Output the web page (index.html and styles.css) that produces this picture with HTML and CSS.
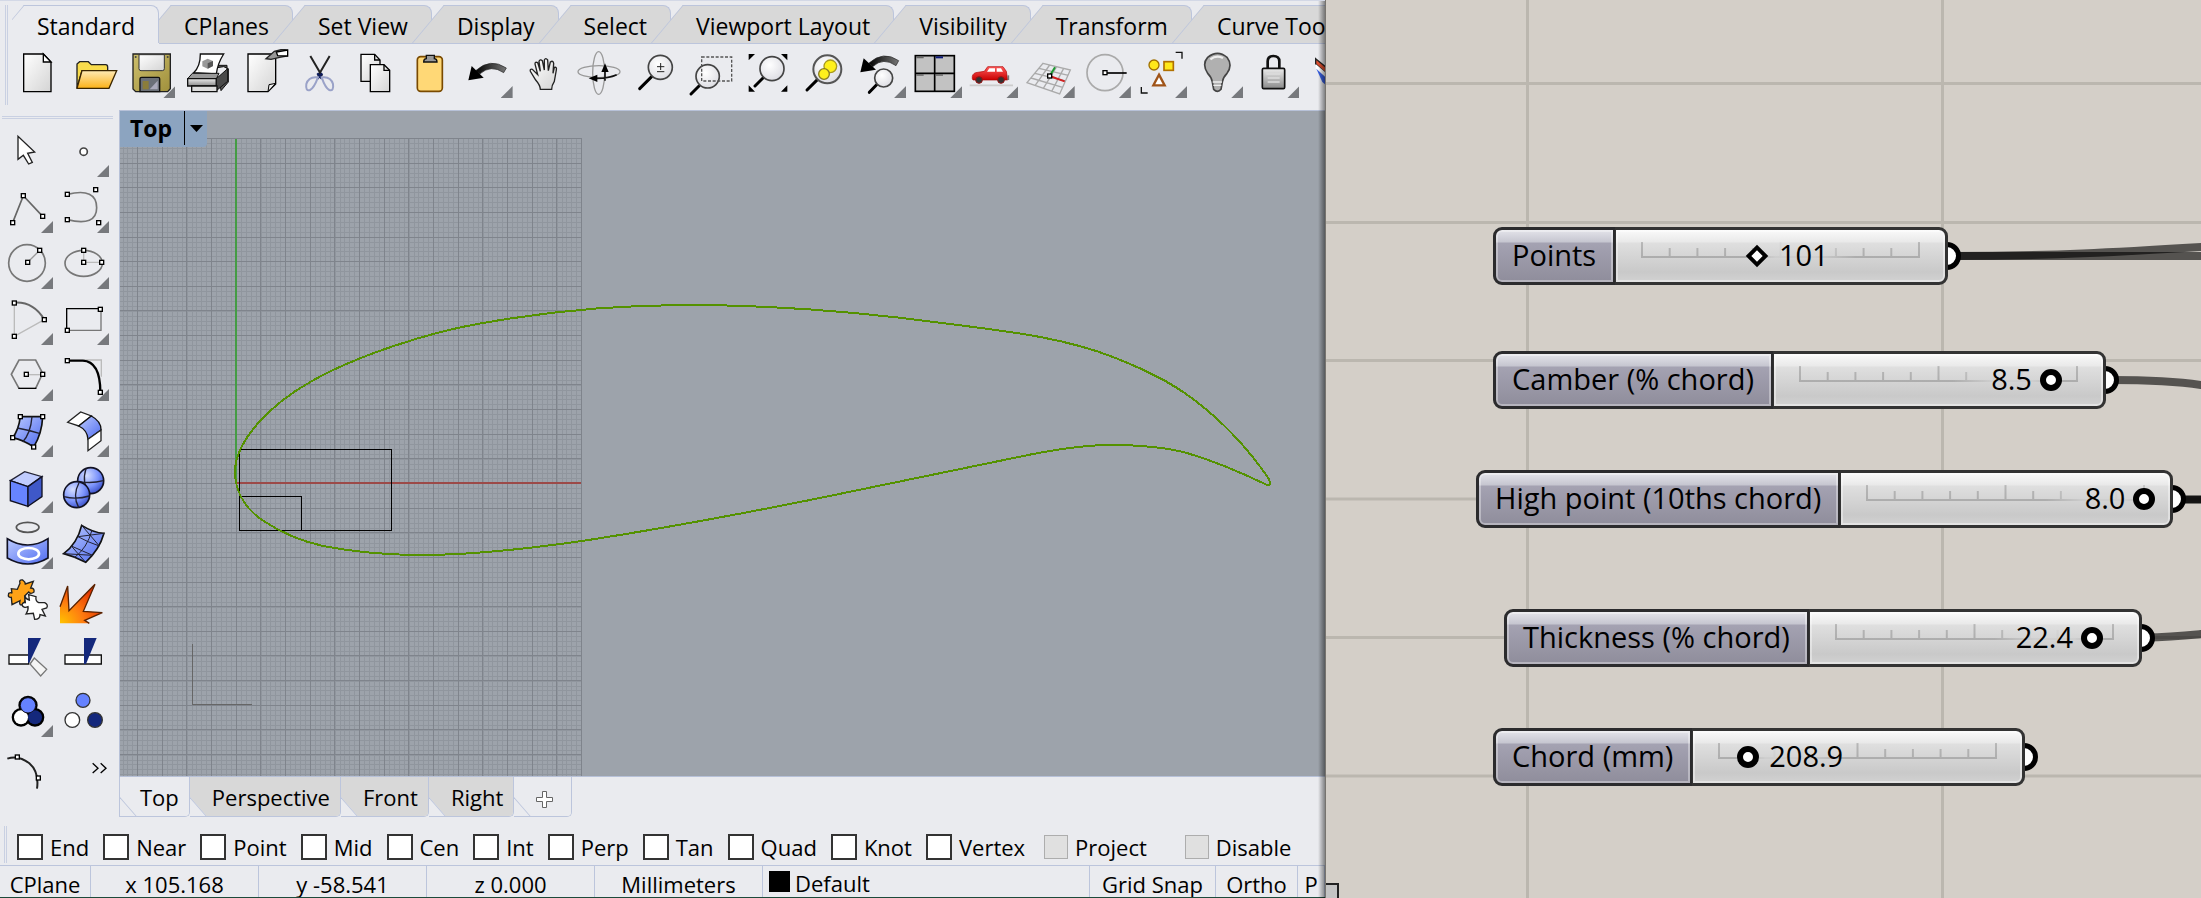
FILE: index.html
```html
<!DOCTYPE html>
<html lang="en">
<head>
<meta charset="utf-8">
<title>Airfoil – Rhino and Grasshopper</title>
<link rel="stylesheet" href="styles.css">
</head>
<body>
<svg class="defs" aria-hidden="true">
  <defs>
    <rect id="nd" x="-6" y="-6" width="12" height="12" fill="#fff" stroke="#000" stroke-width="4"/>
    <linearGradient id="gPaper" x1="0" y1="0" x2="1" y2="1"><stop offset="0" stop-color="#fff"/><stop offset="1" stop-color="#d4d4d4"/></linearGradient>
    <linearGradient id="gGold" x1="0" y1="0" x2="0" y2="1"><stop offset="0" stop-color="#ffeab5"/><stop offset="1" stop-color="#fbb117"/></linearGradient>
    <linearGradient id="gOlive" x1="0" y1="0" x2="1" y2="1"><stop offset="0" stop-color="#cdbf6c"/><stop offset="1" stop-color="#a0903c"/></linearGradient>
    <linearGradient id="gGrey" x1="0" y1="0" x2="0" y2="1"><stop offset="0" stop-color="#ececec"/><stop offset="1" stop-color="#8a8a8a"/></linearGradient>
    <linearGradient id="gSweep" x1="0" y1="0" x2="1" y2="0"><stop offset="0" stop-color="#000"/><stop offset="1" stop-color="#777"/></linearGradient>
    <linearGradient id="gBlue" x1="0" y1="0" x2="1" y2="1"><stop offset="0" stop-color="#bccbff"/><stop offset="1" stop-color="#4f6bf0"/></linearGradient>
    <linearGradient id="gRed" x1="0" y1="0" x2="0" y2="1"><stop offset="0" stop-color="#ff5a5a"/><stop offset="1" stop-color="#c80000"/></linearGradient>
    <radialGradient id="gBall" cx=".35" cy=".3" r=".75"><stop offset="0" stop-color="#d5deff"/><stop offset=".6" stop-color="#7b93fb"/><stop offset="1" stop-color="#3a50c8"/></radialGradient>
    <radialGradient id="gFire" cx="0" cy="1" r="1.1"><stop offset="0" stop-color="#ffc400"/><stop offset=".5" stop-color="#ff7d10"/><stop offset="1" stop-color="#e03000"/></radialGradient>
    <radialGradient id="gLens" cx=".4" cy=".35" r=".7"><stop offset="0" stop-color="#fff"/><stop offset="1" stop-color="#dcdce2"/></radialGradient>
  </defs>
</svg>

<div class="desktop">
<main class="rhino">
  <nav class="tabs" aria-label="Toolbar groups">
    <button class="tab active"><span>Standard</span></button>
    <button class="tab"><span>CPlanes</span></button>
    <button class="tab"><span>Set View</span></button>
    <button class="tab"><span>Display</span></button>
    <button class="tab"><span>Select</span></button>
    <button class="tab"><span>Viewport Layout</span></button>
    <button class="tab"><span>Visibility</span></button>
    <button class="tab"><span>Transform</span></button>
    <button class="tab"><span>Curve Tools</span></button>
  </nav>

  <div class="toolbar">
    <button class="tool" aria-label="New"><svg viewBox="39 147 156 150"><path d="M71 162H130L153 186V275H71Z" fill="url(#gPaper)" stroke="#000" stroke-width="4"/><path d="M130 162V186H153Z" fill="#fff" stroke="#000" stroke-width="4"/></svg></button>
    <button class="tool" aria-label="Open"><svg viewBox="208 147 156 150"><path d="M232 264V192L240 185H266L275 194H318Q324 194 324 202V212H247L232 264Z" fill="#f9dc4c" stroke="#222" stroke-width="4"/><path d="M247 212H351L328 265H232Z" fill="url(#gGold)" stroke="#3a2500" stroke-width="4"/></svg></button>
    <button class="tool more" aria-label="Save"><svg viewBox="376 147 156 150"><path d="M400 162H512V266L504 275H408L400 267Z" fill="url(#gOlive)" stroke="#222" stroke-width="4"/><path d="M418 164H494V206Q494 212 488 212H424Q418 212 418 206Z" fill="url(#gPaper)" stroke="#333" stroke-width="3"/><path d="M421 275V236Q421 232 426 232H476Q480 232 480 236V275Z" fill="#6b7078" stroke="#111" stroke-width="4"/><rect x="429" y="243" width="18" height="25" fill="#8b7d3a"/><path d="M450 268H474V242Z" fill="#aab"/><circle cx="408" cy="171" r="3" fill="#444"/><circle cx="504" cy="171" r="3" fill="#444"/></svg></button>
    <button class="tool" aria-label="Print"><svg viewBox="545 147 156 150"><path d="M590 212L622 196H680V212L656 232L662 272L684 246V206L670 200Z" fill="#555" stroke="#111" stroke-width="3"/><path d="M580 218Q600 200 600 162H670Q652 190 648 222Z" fill="#fff" stroke="#111" stroke-width="4"/><path d="M606 184L622 176L638 183V198L622 206L606 199Z" fill="#999"/><path d="M622 190L638 183V198L622 206Z" fill="#555"/><path d="M562 236L576 220H656L648 236Z" fill="#999" stroke="#111" stroke-width="3"/><path d="M562 236H648V258H562Z" fill="url(#gGrey)" stroke="#111" stroke-width="4"/><path d="M648 236L682 206V244L648 272Z" fill="#4a4a4a" stroke="#111" stroke-width="3"/><path d="M574 258H650V275H574Z" fill="#ddd" stroke="#111" stroke-width="4"/></svg></button>
    <button class="tool" aria-label="Document properties"><svg viewBox="713 147 156 150"><path d="M743 162H826V252L803 275H743Z" fill="url(#gPaper)" stroke="#000" stroke-width="4"/><path d="M803 275L806 254L826 250Z" fill="#eee" stroke="#000" stroke-width="3"/><path d="M797 176L822 154L846 148L861 150V168L838 172L812 178Z" fill="#999" stroke="#222" stroke-width="4"/><path d="M828 156L862 150V168L832 167Z" fill="#fff" stroke="#000" stroke-width="4"/></svg></button>
    <button class="tool" aria-label="Cut"><svg viewBox="882 147 156 150" fill="none"><path d="M931 168L966 228M989 168L954 228" stroke="#222" stroke-width="6"/><path d="M952 220L966 236M967 220L952 236" stroke="#0d1b5a" stroke-width="7"/><path d="M954 232Q926 228 919 252Q916 274 930 270Q942 264 954 232ZM965 232Q992 228 999 252Q1002 274 988 270Q976 264 965 232Z" stroke="#9aa2c8" stroke-width="6"/></svg></button>
    <button class="tool" aria-label="Copy"><svg viewBox="1051 147 156 150"><path d="M1084 163H1125L1141 180V244H1084Z" fill="url(#gPaper)" stroke="#000" stroke-width="4"/><path d="M1125 163V180H1141" fill="none" stroke="#000" stroke-width="4"/><path d="M1112 194H1153L1170 211V275H1112Z" fill="url(#gPaper)" stroke="#000" stroke-width="4"/><path d="M1153 194V211H1170" fill="none" stroke="#000" stroke-width="4"/></svg></button>
    <button class="tool" aria-label="Paste"><svg viewBox="1219 147 156 150"><rect x="1253" y="170" width="75" height="104" rx="10" fill="#ffd876" stroke="#7a4a00" stroke-width="5"/><path d="M1272 186Q1272 176 1280 176V166H1304V176Q1312 176 1312 186Z" fill="#999" stroke="#111" stroke-width="4"/></svg></button>
    <button class="tool more" aria-label="Undo"><svg viewBox="38 147 156 150"><path d="M76 212Q120 172 168 204L160 218Q122 192 88 222Z" fill="url(#gSweep)" stroke="#222" stroke-width="2"/><path d="M54 241L64 198L100 233Z" fill="#000"/></svg></button>
    <button class="tool" aria-label="Pan"><svg viewBox="206 147 156 150"><path d="M270 268Q270 256 256 240L240 214Q238 206 246 208L262 224L254 192Q254 184 262 188L270 214L266 184Q270 176 276 182L282 210L282 180Q286 172 292 180L294 212L300 186Q308 180 310 190L308 220L312 202Q320 200 318 210L312 244Q304 256 304 268Z" fill="url(#gPaper)" stroke="#222" stroke-width="4"/></svg></button>
    <button class="tool" aria-label="Rotate view"><svg viewBox="375 147 156 150" fill="none"><ellipse cx="447" cy="215" rx="63" ry="18" stroke="#999" stroke-width="4"/><ellipse cx="446" cy="219" rx="18" ry="64" stroke="#999" stroke-width="4"/><path d="M465 242V210M434 235Q474 236 500 224" stroke="#111" stroke-width="5"/><path d="M465 190L476 216H454ZM416 235L442 224V246Z" fill="#000"/></svg></button>
    <button class="tool" aria-label="Zoom dynamic"><svg viewBox="544 147 156 150"><path d="M606 230L570 266" stroke="#000" stroke-width="9" stroke-linecap="round"/><circle cx="632" cy="202" r="36" fill="url(#gLens)" stroke="#444" stroke-width="5"/><path d="M622 200H644M633 189V210M622 215H644" stroke="#222" stroke-width="3" fill="none"/></svg></button>
    <button class="tool" aria-label="Zoom window"><svg viewBox="712 147 156 150"><path d="M748 258L724 282" stroke="#000" stroke-width="9" stroke-linecap="round"/><circle cx="774" cy="229" r="35" fill="url(#gLens)" stroke="#444" stroke-width="5"/><rect x="756" y="171" width="90" height="72" fill="none" stroke="#555" stroke-width="4" stroke-dasharray="9 5"/></svg></button>
    <button class="tool" aria-label="Zoom extents"><svg viewBox="881 147 156 150"><path d="M938 234L914 258" stroke="#000" stroke-width="9" stroke-linecap="round"/><circle cx="965" cy="206" r="36" fill="url(#gLens)" stroke="#444" stroke-width="5"/><path d="M895 162H914L895 181ZM1011 162H992L1011 181ZM895 275H914L895 256ZM1011 275H992L1011 256Z"/></svg></button>
    <button class="tool" aria-label="Zoom selected"><svg viewBox="1049 147 156 150"><path d="M1102 238L1070 270" stroke="#000" stroke-width="9" stroke-linecap="round"/><circle cx="1131" cy="208" r="42" fill="url(#gLens)" stroke="#555" stroke-width="6"/><circle cx="1140" cy="199" r="19" fill="#fff01c" stroke="#a89a20" stroke-width="4"/><circle cx="1121" cy="222" r="16" fill="#fff01c" stroke="#8a7d20" stroke-width="4"/></svg></button>
    <button class="tool more" aria-label="Undo view change"><svg viewBox="1218 147 156 150"><path d="M1256 190Q1300 150 1346 182L1338 197Q1300 170 1268 200Z" fill="url(#gSweep)" stroke="#222" stroke-width="2"/><path d="M1231 217L1241 175L1278 209Z"/><path d="M1282 252L1258 277" stroke="#000" stroke-width="9" stroke-linecap="round"/><circle cx="1301" cy="234" r="27" fill="url(#gLens)" stroke="#444" stroke-width="5"/></svg></button>
    <button class="tool more" aria-label="Four viewports"><svg viewBox="67 147 156 150"><rect x="77" y="167" width="117" height="107" fill="#c2c2c2" stroke="#000" stroke-width="5"/><path d="M135 167V274M77 220H194" stroke="#000" stroke-width="5"/><path d="M80 172H102M80 225H102M138 225H160" stroke="#666" stroke-width="5"/><path d="M138 172H160" stroke="#0d1b7a" stroke-width="6"/></svg></button>
    <button class="tool more" aria-label="Set view"><svg viewBox="235 147 156 150"><path d="M240 256H370" stroke="#ccc" stroke-width="5"/><path d="M248 236Q246 222 258 218L284 214L294 200H340L350 214L354 240H250Z" fill="url(#gRed)" stroke="#b00000" stroke-width="2"/><path d="M292 215L299 205H316V215ZM321 205H334L340 215H321Z" fill="#fff"/><circle cx="268" cy="240" r="10" fill="#333" stroke="#911" stroke-width="3"/><circle cx="334" cy="240" r="10" fill="#333" stroke="#911" stroke-width="3"/><path d="M356 226V240" stroke="#777" stroke-width="5"/></svg></button>
    <button class="tool more" aria-label="Set CPlane"><svg viewBox="404 147 156 150" fill="none"><path d="M458 190L540 210L508 282L410 248ZM446 205L534 226M434 220L526 243M422 234L517 262M478 195L434 257M499 200L459 265M520 205L484 274" stroke="#aaa" stroke-width="4"/><path d="M478 228L494 202" stroke="#1c9a30" stroke-width="6"/><path d="M478 228L523 244" stroke="#d02020" stroke-width="6"/><use href="#nd" x="478" y="228"/></svg></button>
    <button class="tool more" aria-label="Object snap"><svg viewBox="572 147 156 150"><circle cx="644" cy="218" r="54" fill="none" stroke="#aaa" stroke-width="5"/><path d="M644 219H709" stroke="#000" stroke-width="5"/><use href="#nd" x="644" y="218"/></svg></button>
    <button class="tool more" aria-label="Select objects"><svg viewBox="741 147 156 150"><circle cx="792" cy="195" r="15" fill="#ffe81a" stroke="#a07000" stroke-width="4"/><rect x="822" y="185" width="28" height="26" fill="#ffe81a" stroke="#b07000" stroke-width="5"/><path d="M807 224L824 256H790Z" fill="#fff" stroke="#a05418" stroke-width="7"/><path d="M857 157H876V176M754 261V279H773" fill="none" stroke="#111" stroke-width="4"/></svg></button>
    <button class="tool more" aria-label="Lights"><svg viewBox="910 147 156 150"><path d="M968 246Q966 232 954 220Q936 192 954 172Q984 148 1012 172Q1030 196 1012 220Q1000 232 998 246L994 268Q984 280 972 268Z" fill="#b0b0b0" stroke="#444" stroke-width="5"/><path d="M962 178Q980 164 1000 174" stroke="#eee" stroke-width="7" fill="none"/><path d="M969 246H997M971 256H995" stroke="#eee" stroke-width="4"/></svg></button>
    <button class="tool more" aria-label="Lock"><svg viewBox="1078 147 156 150"><path d="M1134 206V184Q1134 168 1151 168Q1169 168 1169 184V206" fill="none" stroke="#111" stroke-width="8"/><rect x="1118" y="205" width="67" height="61" rx="4" fill="url(#gGrey)" stroke="#111" stroke-width="5"/><path d="M1130 222H1172M1134 234H1170M1134 246H1170" stroke="#ddd" stroke-width="4"/></svg></button>
    <button class="tool" aria-label="Layers"><svg viewBox="1247 147 156 150"><path d="M1276 176L1330 220V240L1276 192Z" fill="#e05030" stroke="#222" stroke-width="4"/><path d="M1276 192L1330 238V254L1276 206Z" fill="#fff"/><path d="M1278 206L1330 254V276L1296 246Z" fill="#3a60e0"/></svg></button>
  </div>

  <section class="work">
    <aside class="sidebar">
      <button class="tool" aria-label="Select"><svg viewBox="3 63 156 168"><path d="M54 109V178L70 166L86 192L97 187L83 160L104 156Z" fill="#fff" stroke="#222" stroke-width="4"/></svg></button>
      <button class="tool more" aria-label="Point"><svg viewBox="171 63 156 168"><circle cx="251" cy="155" r="11" fill="#fff" stroke="#444" stroke-width="5"/></svg></button>
      <button class="tool more" aria-label="Polyline"><svg viewBox="3 231 156 168"><path d="M38 368L70 287L128 349" fill="none" stroke="#666" stroke-width="5"/><use href="#nd" x="38" y="368"/><use href="#nd" x="70" y="287"/><use href="#nd" x="128" y="349"/></svg></button>
      <button class="tool more" aria-label="Curve"><svg viewBox="171 231 156 168"><path d="M202 283Q290 262 290 323Q290 380 202 359" fill="none" stroke="#777" stroke-width="5"/><use href="#nd" x="202" y="283"/><use href="#nd" x="287" y="269"/><use href="#nd" x="202" y="359"/><use href="#nd" x="296" y="368"/></svg></button>
      <button class="tool more" aria-label="Circle"><svg viewBox="3 399 156 168"><circle cx="81" cy="489" r="55" fill="none" stroke="#777" stroke-width="5"/><path d="M83 487L119 451" stroke="#999" stroke-width="4"/><use href="#nd" x="83" y="487"/><use href="#nd" x="119" y="451"/></svg></button>
      <button class="tool more" aria-label="Ellipse"><svg viewBox="171 399 156 168"><ellipse cx="251" cy="490" rx="56" ry="39" fill="none" stroke="#777" stroke-width="5"/><path d="M251 451V487H305" fill="none" stroke="#bbb" stroke-width="4"/><use href="#nd" x="251" y="451"/><use href="#nd" x="251" y="487"/><use href="#nd" x="305" y="487"/></svg></button>
      <button class="tool more" aria-label="Arc"><svg viewBox="3 567 156 168"><path d="M43 609V709L133 659" fill="none" stroke="#bbb" stroke-width="4"/><path d="M43 608Q100 604 133 659" fill="none" stroke="#666" stroke-width="6"/><use href="#nd" x="43" y="609"/><use href="#nd" x="43" y="709"/><use href="#nd" x="133" y="659"/></svg></button>
      <button class="tool more" aria-label="Rectangle"><svg viewBox="171 567 156 168"><path d="M200 691V626H301" fill="none" stroke="#000" stroke-width="4"/><path d="M200 691H303V626" fill="none" stroke="#777" stroke-width="4"/><use href="#nd" x="301" y="628"/><use href="#nd" x="202" y="691"/></svg></button>
      <button class="tool more" aria-label="Polygon"><svg viewBox="3 735 156 168"><path d="M57 865L34 823L57 780H107L128 820L107 865" fill="none" stroke="#777" stroke-width="5"/><path d="M55 865H109" stroke="#000" stroke-width="4"/><path d="M79 824H128" stroke="#bbb" stroke-width="4"/><use href="#nd" x="79" y="823"/><use href="#nd" x="128" y="823"/></svg></button>
      <button class="tool more" aria-label="Fillet"><svg viewBox="171 735 156 168"><path d="M250 780H304V830" fill="none" stroke="#bbb" stroke-width="4"/><path d="M202 782H248Q301 784 301 877" fill="none" stroke="#000" stroke-width="7"/><use href="#nd" x="202" y="782"/><use href="#nd" x="301" y="877"/></svg></button>
      <button class="tool more" aria-label="Surface from points"><svg viewBox="3 903 156 168"><path d="M61 950H128Q126 1000 101 1041Q70 1020 38 1013Q56 990 61 950Z" fill="url(#gBlue)" stroke="#111" stroke-width="5"/><path d="M96 950Q92 1000 68 1026M52 984Q84 990 118 1000" fill="none" stroke="#223" stroke-width="4"/><use href="#nd" x="61" y="950"/><use href="#nd" x="128" y="950"/><use href="#nd" x="38" y="1013"/><use href="#nd" x="101" y="1041"/></svg></button>
      <button class="tool more" aria-label="Fillet surface"><svg viewBox="171 903 156 168"><path d="M203 967L242 936L274 948L236 978Z" fill="#fff" stroke="#222" stroke-width="4"/><path d="M236 978L274 948Q304 964 303 990L264 1018Q262 990 236 978Z" fill="url(#gBlue)" stroke="#111" stroke-width="4"/><path d="M264 1018L303 990V1022L264 1052Z" fill="#fff" stroke="#222" stroke-width="4"/></svg></button>
      <button class="tool more" aria-label="Box"><svg viewBox="3 51 156 168"><path d="M31 122L74 95L126 110L84 140Z" fill="#c0ccff" stroke="#223" stroke-width="4"/><path d="M31 122L84 140V199L31 182Z" fill="#6784ff" stroke="#112" stroke-width="4"/><path d="M84 140L126 110V170L84 199Z" fill="#3f58c8" stroke="#112" stroke-width="4"/></svg></button>
      <button class="tool more" aria-label="Boolean union"><svg viewBox="171 51 156 168"><circle cx="272" cy="122" r="39" fill="url(#gBall)" stroke="#112" stroke-width="5"/><path d="M258 86Q244 130 270 160M236 124Q272 132 310 122" fill="none" stroke="#223" stroke-width="4"/><circle cx="230" cy="164" r="39" fill="url(#gBall)" stroke="#112" stroke-width="5"/><path d="M238 126Q216 168 236 202M192 170Q228 180 268 168" fill="none" stroke="#223" stroke-width="4"/></svg></button>
      <button class="tool more" aria-label="Project to surface"><svg viewBox="3 219 156 168"><ellipse cx="83" cy="262" rx="34" ry="15" fill="none" stroke="#555" stroke-width="5"/><path d="M22 296Q84 334 144 296V354Q84 390 22 354Z" fill="url(#gBlue)" stroke="#112" stroke-width="5"/><ellipse cx="86" cy="341" rx="31" ry="17" fill="none" stroke="#fff" stroke-width="8"/></svg></button>
      <button class="tool more" aria-label="Mesh"><svg viewBox="171 219 156 168"><path d="M245 256Q280 278 312 280Q298 330 257 367Q226 350 191 341Q232 310 245 256Z" fill="url(#gBlue)" stroke="#111" stroke-width="5"/><path d="M276 270Q262 324 222 354M234 290Q262 306 298 318M214 318Q250 334 278 346M245 256L298 318M214 318L257 367M312 280L234 290M278 346L191 341" fill="none" stroke="#223" stroke-width="3"/></svg></button>
      <button class="tool" aria-label="Join"><svg viewBox="3 387 156 168"><path d="M60 430Q56 418 68 420Q76 426 76 432L100 424L92 444Q104 444 102 456Q92 464 86 456L74 468Q80 482 68 494Q56 498 60 482L36 494L34 472Q22 474 26 460Q34 456 36 460L34 446L52 448Z" fill="#ffa216" stroke="#222" stroke-width="4"/><path d="M74 468Q76 476 88 480L86 464L108 470Q106 484 116 488L134 488Q146 494 140 504L126 508L136 528L120 524Q120 538 104 538L100 520L78 522Q86 510 84 500Q70 506 66 494Q68 486 76 488Z" fill="#fff" stroke="#222" stroke-width="4"/></svg></button>
      <button class="tool" aria-label="Explode"><svg viewBox="171 387 156 168"><path d="M180 500L203 438L207 512L285 433L250 514L307 518L254 541L268 550H180Z" fill="url(#gFire)"/><path d="M180 500L203 438L207 512L285 433L250 514L307 518L254 541L268 550" fill="none" stroke="#5a2200" stroke-width="4"/></svg></button>
      <button class="tool" aria-label="Trim"><svg viewBox="3 555 156 168"><path d="M27 645H86V672H27Z" fill="#fff" stroke="#111" stroke-width="4"/><path d="M84 594H123L88 668H84Z" fill="#14287c"/><path d="M90 672L103 654L140 688L122 708Z" fill="#f4f4f4" stroke="#777" stroke-width="4"/></svg></button>
      <button class="tool" aria-label="Split"><svg viewBox="171 555 156 168"><path d="M195 645H304V672H195Z" fill="#fff" stroke="#111" stroke-width="4"/><path d="M252 594H290L258 672H252Z" fill="#14287c"/></svg></button>
      <button class="tool more" aria-label="Group"><svg viewBox="3 723 156 168"><g stroke="#000" stroke-width="10"><circle cx="63" cy="832" r="23"/><circle cx="105" cy="832" r="23"/><circle cx="84" cy="796" r="24"/></g><circle cx="63" cy="832" r="21" fill="#fff"/><circle cx="105" cy="832" r="21" fill="#14287c"/><circle cx="84" cy="796" r="23" fill="#6582ff" stroke="#112" stroke-width="3"/></svg></button>
      <button class="tool" aria-label="Ungroup"><svg viewBox="171 723 156 168" stroke="#333" stroke-width="4"><circle cx="249" cy="781" r="21" fill="#6582ff"/><circle cx="217" cy="840" r="22" fill="#fff"/><circle cx="285" cy="840" r="22" fill="#14287c"/></svg></button>
      <button class="tool" aria-label="Edit points"><svg viewBox="3 891 156 168"><path d="M22 956Q56 944 88 970Q118 996 111 1046" fill="none" stroke="#222" stroke-width="6"/><use href="#nd" x="52" y="951"/><use href="#nd" x="115" y="1014"/></svg></button>
      <button class="tool" aria-label="More tools"><svg viewBox="171 891 156 168"><path d="M278 970L294 985L278 999M302 970L318 985L302 999" fill="none" stroke="#000" stroke-width="4"/></svg></button>
    </aside>

    <div class="stage">
      <div class="viewport">
        <svg class="scene" role="img" aria-label="Top view of the airfoil curve">
          <g transform="translate(-120 -111)" fill="none" shape-rendering="crispEdges">
            <path d="M122.5 457H582" stroke="#90969e" stroke-width="638" stroke-dasharray="1 3.933"/>
            <path d="M351 138V776" stroke="#90969e" stroke-width="462" stroke-dasharray="1 3.933"/>
            <path d="M137 457H583" stroke="#7f848c" stroke-width="638" stroke-dasharray="1 23.666"/>
            <path d="M351 138V776" stroke="#7f848c" stroke-width="462" stroke-dasharray="1 23.64"/>
            <path d="M236 139V483" stroke="#459c45" stroke-width="2"/>
            <path d="M236 483H581" stroke="#9c4a48" stroke-width="2"/>
            <path d="M239 449H391V530H239ZM239 496H301V530" transform="translate(.5 .5)" stroke="#000"/>
            <path d="M192.500 644V704.500H252" stroke="#666"/>
            <path d="M235 472C235 440 272 403 312 381C354 357 428 332 483 323C550 311 619 305 687 305C775 305 862 312 950 324C1004 331 1062 337 1113 357C1141 368 1168 380 1193 399C1221 420 1247 447 1269 479Q1272 488 1265 484C1240 472 1214 461 1187 453C1161 446 1136 445 1110 445C1084 445 1059 449 1033 454C959 469 885 485 810 500C735 515 660 529 582 541C526 549 475 555 422 555C387 555 354 552 323 546C300 541 280 532 262 520C245 508 235 491 235 472Z" stroke="#549200" stroke-width="2"/>
          </g>
        </svg>
        <div class="view-title"><button class="view-name">Top</button><button class="view-menu" aria-label="Viewport menu"><svg viewBox="0 0 13 8"><path d="M0 0H13L6.500 7Z"/></svg></button></div>
      </div>
      <nav class="view-tabs" aria-label="Viewports">
        <button class="vtab active"><span>Top</span></button>
        <button class="vtab"><span>Perspective</span></button>
        <button class="vtab"><span>Front</span></button>
        <button class="vtab"><span>Right</span></button>
        <button class="vtab add active" aria-label="Add viewport"><svg viewBox="0 0 18 18"><path d="M6.500 .5H10.500V6.500H16.500V10.500H10.500V16.500H6.500V10.500H.5V6.500H6.500Z" fill="#fff" stroke="#666"/></svg></button>
      </nav>
    </div>
  </section>

  <div class="osnap">
    <label><input type="checkbox">End</label>
    <label><input type="checkbox">Near</label>
    <label><input type="checkbox">Point</label>
    <label><input type="checkbox">Mid</label>
    <label><input type="checkbox">Cen</label>
    <label><input type="checkbox">Int</label>
    <label><input type="checkbox">Perp</label>
    <label><input type="checkbox">Tan</label>
    <label><input type="checkbox">Quad</label>
    <label><input type="checkbox">Knot</label>
    <label><input type="checkbox">Vertex</label>
    <label class="off"><input type="checkbox" disabled>Project</label>
    <label class="off"><input type="checkbox" disabled>Disable</label>
  </div>

  <footer class="status">
    <button class="cell plane">CPlane</button>
    <span class="cell">x 105.168</span>
    <span class="cell">y -58.541</span>
    <span class="cell">z 0.000</span>
    <span class="cell">Millimeters</span>
    <button class="cell layer"><i class="swatch"></i>Default</button>
    <button class="cell snap">Grid Snap</button>
    <button class="cell ortho">Ortho</button>
    <button class="cell planar">P</button>
  </footer>
</main>

<section class="canvas" aria-label="Grasshopper canvas">
  <svg class="wires" aria-hidden="true">
    <g transform="translate(-1326 0)" fill="none">
      <path d="M1325 83.500H2600M1325 222.500H2600M1325 360.500H2600M1325 499H2600M1325 637.500H2600M1325 776H2600M1527.500 0V1200M1942.500 0V1200" stroke="#bbb7af" stroke-width="3"/>
      <g stroke="#000" stroke-opacity=".6" stroke-width="8">
        <path d="M1950 256H2600"/>
        <path d="M1950 256C2050 256 2120 252 2201 247S2400 220 2600 200"/>
        <path d="M2110 380C2150 380 2175 381 2201 385S2400 420 2600 440"/>
        <path d="M2180 499.500H2600" stroke-opacity=".9"/>
        <path d="M2145 637.500C2170 637 2180 636 2201 634S2400 600 2600 580"/>
      </g>
    </g>
  </svg>

  <div class="node points">
    <label class="name" for="points">Points</label>
    <div class="track after" style="--pos:.418">
      <svg class="ticks" viewBox="0 0 281 20"><use href="#scale"/></svg>
      <input id="points" class="diamond" type="range" min="0" max="1000" value="418">
      <output for="points">101</output>
    </div>
  </div>
  <div class="node camber">
    <label class="name" for="camber">Camber (% chord)</label>
    <div class="track before" style="--pos:.906">
      <svg class="ticks" viewBox="0 0 281 20"><use href="#scale"/></svg>
      <input id="camber" type="range" min="0" max="1000" value="906">
      <output for="camber">8.5</output>
    </div>
  </div>
  <div class="node high">
    <label class="name" for="high">High point (10ths chord)</label>
    <div class="track before" style="--pos:1">
      <svg class="ticks" viewBox="0 0 281 20"><use href="#scale"/></svg>
      <input id="high" type="range" min="0" max="1000" value="1000">
      <output for="high">8.0</output>
    </div>
  </div>
  <div class="node thickness">
    <label class="name" for="thickness">Thickness (% chord)</label>
    <div class="track before" style="--pos:.925">
      <svg class="ticks" viewBox="0 0 281 20"><use href="#scale"/></svg>
      <input id="thickness" type="range" min="0" max="1000" value="925">
      <output for="thickness">22.4</output>
    </div>
  </div>
  <div class="node chord">
    <label class="name" for="chord">Chord (mm)</label>
    <div class="track after" style="--pos:.104">
      <svg class="ticks" viewBox="0 0 281 20"><use href="#scale"/></svg>
      <input id="chord" type="range" min="0" max="1000" value="104">
      <output for="chord">208.9</output>
    </div>
  </div>
  <div class="stub"></div>
</section>
</div>
<svg class="defs" aria-hidden="true"><defs>
  <path id="scale" d="M1 16H280M2 1V16M140.500 1V16M279 1V16M29.700 7V16M57.400 7V16M85.100 7V16M112.800 7V16M168.200 7V16M195.900 7V16M223.600 7V16M251.300 7V16" fill="none" stroke="#000" stroke-opacity=".18" stroke-width="2"/>
</defs></svg>
</body>
</html>
```
FILE: styles.css
```css
*,
*::before,
*::after { box-sizing: border-box; }

body {
  margin: 0;
  height: 100vh;
  overflow: hidden;
  font-family: "Open Sans", "Noto Sans", sans-serif;
  font-size: 22px;
  line-height: 30px;
  color: #000;
}

button {
  margin: 0;
  padding: 0;
  border: 0;
  background: none;
  font: inherit;
  color: inherit;
}

.defs { position: absolute; width: 0; height: 0; }

.desktop { display: flex; height: 100%; }

/* ---------- modelling window ---------- */

.rhino {
  flex: 0 0 60.2%;
  min-width: 0;
  display: flex;
  flex-direction: column;
  overflow: hidden;
  position: relative;
  background: #eaebef;
  border-top: 1px solid #d3d8e6;
}

.rhino::after {
  content: "";
  position: absolute;
  z-index: 2;
  inset: 0 0 0 auto;
  width: 7px;
  background: linear-gradient(90deg, rgba(0, 0, 0, 0), rgba(0, 0, 0, .45));
}

.rhino::before {
  content: "";
  position: absolute;
  left: 5px;
  top: 4px;
  width: 3px;
  height: 100px;
  border: solid #c9d0e2;
  border-width: 0 1px;
}

.tabs {
  display: flex;
  flex: none;
  height: 43px;
  padding-top: 4px;
  margin-left: 12px;
  overflow: hidden;
  font-size: 23px;
}

.tab {
  position: relative;
  flex: none;
  isolation: isolate;
  height: 39px;
  margin-left: -20px;
  padding: 3px 24px 0 45px;
  line-height: 34px;
  white-space: nowrap;
  border-bottom: 1px solid #bcc5dc;
}

.tab::before,
.tab::after {
  content: "";
  position: absolute;
  z-index: -1;
  top: 0;
  bottom: 0;
  background: #d8d8d8;
  border-top: 1px solid #bcc5dc;
}

.tab::before {
  left: 0;
  width: 50px;
  border-left: 1px solid #bcc5dc;
  transform: skewX(-40deg);
  transform-origin: left bottom;
}

.tab::after {
  left: 40px;
  right: 0;
  border-right: 1px solid #bcc5dc;
  border-top-right-radius: 8px;
}

.tab.active { z-index: 1; border-bottom-color: #eaebef; }
.tab.active::before,
.tab.active::after { background: #eaebef; }

.toolbar {
  flex: none;
  display: flex;
  justify-content: space-between;
  height: 66px;
  margin-right: -33px;
  padding: 5px 0 0 13px;
}

.tool { position: relative; width: 52px; height: 50px; flex: none; }
.tool svg { display: block; width: 100%; height: 100%; }

.more::after {
  content: "";
  position: absolute;
  right: 2px;
  bottom: 1px;
  width: 12px;
  height: 12px;
  background: #77797d;
  clip-path: polygon(100% 0, 100% 100%, 0 100%);
}

.work { flex: 1; min-height: 0; display: flex; }

.sidebar {
  flex: 0 0 119px;
  display: grid;
  grid-template-columns: 52px 52px;
  grid-auto-rows: 56px;
  column-gap: 4px;
  align-content: start;
  padding: 11px 0 0 1px;
  position: relative;
}

.sidebar::before {
  content: "";
  position: absolute;
  left: 2px;
  right: 6px;
  top: 6px;
  height: 3px;
  border: solid #c9d0e2;
  border-width: 1px 0;
}

.sidebar .tool { height: 56px; }
.sidebar .more::after { right: 0; bottom: 0; }

.stage { flex: 1; min-width: 0; display: flex; flex-direction: column; }

.viewport {
  flex: 1;
  min-height: 0;
  position: relative;
  background: #9da3ab;
  border: solid #b7c1d8;
  border-width: 1px 0 1px 1px;
}

.scene { display: block; width: 100%; height: 100%; }

.view-title {
  position: absolute;
  left: 0;
  top: 0;
  display: flex;
  height: 36px;
  background: #8ca4c0;
  border-bottom-right-radius: 4px;
}

.view-name {
  height: 34px;
  padding: 0 12px 0 10px;
  font-size: 23px;
  line-height: 34px;
  font-weight: 700;
  border-right: 1px solid #000;
}

.view-menu { width: 22px; height: 33px; }
.view-menu svg { width: 13px; height: 8px; margin-bottom: 4px; }

.view-tabs { flex: none; display: flex; height: 48px; }

.vtab {
  height: 40px;
  padding: 0 10px 0 22px;
  line-height: 38px;
  position: relative;
  isolation: isolate;
  overflow: hidden;
  border: solid #bcc5dc;
  border-width: 0 1px 1px 0;
  border-bottom-right-radius: 5px;
}

.vtab::before {
  content: "";
  position: absolute;
  z-index: -1;
  inset: 0;
  background: #d8d8d8;
}

.vtab::after {
  content: "";
  position: absolute;
  left: -20px;
  top: 20px;
  width: 20px;
  height: 40px;
  background: #eaebef;
  border-right: 1px solid #bcc5dc;
  transform: skewX(41deg);
  transform-origin: right top;
}

.vtab.active::before { background: #eaebef; }
.vtab:first-child { padding-left: 20px; border-left-width: 1px; }
.add { width: 58px; padding: 0 0 0 4px; }
.add svg { width: 18px; height: 18px; vertical-align: middle; }

/* ---------- snaps and status ---------- */

.osnap {
  flex: none;
  display: flex;
  align-items: center;
  gap: 14px;
  height: 40px;
  padding: 4px 0 0 13px;
  margin-left: 4px;
  white-space: nowrap;
  position: relative;
}

.osnap::before {
  content: "";
  position: absolute;
  left: 0;
  top: 1px;
  bottom: 2px;
  width: 3px;
  border: solid #c9d0e2;
  border-width: 0 1px;
}

.osnap label { display: flex; align-items: center; gap: 7px; line-height: 32px; }

.osnap input {
  appearance: none;
  width: 26px;
  height: 26px;
  margin: 0;
  background: #fff;
  border: 2px solid #333;
}

.osnap input:disabled {
  width: 24px;
  height: 24px;
  background: #e0e0e0;
  border: 1px solid #adadad;
}

.osnap .off { margin-left: 5px; }
.osnap .off + .off { margin-left: 24px; }

.status {
  flex: none;
  display: flex;
  height: 33px;
  border-top: 1px solid #bcc5dc;
  border-bottom: 1px solid #1d4a3a;
  white-space: nowrap;
}

.cell {
  flex: 0 0 168px;
  line-height: 37px;
  height: 31px;
  overflow: hidden;
  text-align: center;
  border-right: 1px solid #bcc5dc;
}

button.cell { line-height: 30px; padding-top: 3px; }

.plane { flex-basis: 91px; }
.status .layer { flex: 1; display: flex; align-items: center; gap: 5px; padding: 3px 0 0 6px; }
.swatch { width: 21px; height: 21px; margin-bottom: 3px; background: #000; }
.snap { flex-basis: 126px; }
.ortho { flex-basis: 82px; }
.planar { flex-basis: 27px; }

/* ---------- graph canvas ---------- */

.canvas {
  flex: 1;
  position: relative;
  isolation: isolate;
  overflow: hidden;
  background: #d4cfc8;
  border-left: 1px solid #77746f;
  font-size: 29px;
}

.wires {
  position: absolute;
  z-index: -2;
  inset: 0;
  width: 100%;
  height: 100%;
}

.node {
  position: absolute;
  display: flex;
  height: 58px;
  white-space: nowrap;
}

.node::before {
  content: "";
  position: absolute;
  z-index: -1;
  right: -13px;
  top: 15px;
  width: 28px;
  height: 28px;
  border: 5px solid #000;
  border-radius: 50%;
  background: #fff;
}

.points { left: 167px; top: 227px; }
.camber { left: 167px; top: 351px; }
.high { left: 150px; top: 470px; }
.thickness { left: 178px; top: 609px; }
.chord { left: 167px; top: 728px; }

.name {
  padding: 0 17px 0 16px;
  line-height: 50px;
  border: 3px solid #2b2b2d;
  border-right-width: 2px;
  border-radius: 9px 0 0 9px;
  background: linear-gradient(#e4e4ea, #c6c6d0 12px, #a4a2b2 13px, #8f8d9b);
  box-shadow: inset 0 0 0 2px rgba(255, 255, 255, .35);
}

.track {
  position: relative;
  width: 333px;
  border: 3px solid #333;
  border-left-width: 1px;
  border-radius: 0 9px 9px 0;
  background: linear-gradient(#fafafa, #e9e9e9 12px, #dfdfdf 13px, #c9c9c9 42px, #d2d2d2);
  box-shadow: inset 0 0 0 2px rgba(255, 255, 255, .4);
}

.ticks {
  position: absolute;
  left: 24px;
  top: 11px;
  width: 281px;
  height: 20px;
}

.after .ticks {
  mask-image: linear-gradient(90deg, #000 calc(var(--pos) * 277px - 10px), rgba(0, 0, 0, .15) calc(var(--pos) * 277px + 20px), rgba(0, 0, 0, .15) calc(var(--pos) * 277px + 60px), #000 calc(var(--pos) * 277px + 100px));
}

.before .ticks {
  mask-image: linear-gradient(270deg, #000 calc(277px - var(--pos) * 277px - 10px), rgba(0, 0, 0, .15) calc(297px - var(--pos) * 277px), rgba(0, 0, 0, .15) calc(337px - var(--pos) * 277px), #000 calc(377px - var(--pos) * 277px));
}

.track input {
  appearance: none;
  position: absolute;
  left: 15px;
  top: 15px;
  width: 299px;
  height: 22px;
  margin: 0;
  background: none;
}

.track input::-webkit-slider-thumb {
  appearance: none;
  width: 22px;
  height: 22px;
  border: 6px solid #000;
  border-radius: 50%;
  background: #fff;
}

.track .diamond::-webkit-slider-thumb {
  width: 16px;
  height: 16px;
  border-width: 4px;
  border-radius: 0;
  transform: rotate(45deg);
}

output { position: absolute; top: 0; line-height: 50px; }
.after output { left: calc(47px + var(--pos) * 277px); }
.before output { right: calc(322px - var(--pos) * 277px); }

.stub {
  position: absolute;
  left: -4px;
  bottom: -10px;
  width: 17px;
  height: 25px;
  border: 2px solid #222;
  background: #c4c4c4;
}
```
